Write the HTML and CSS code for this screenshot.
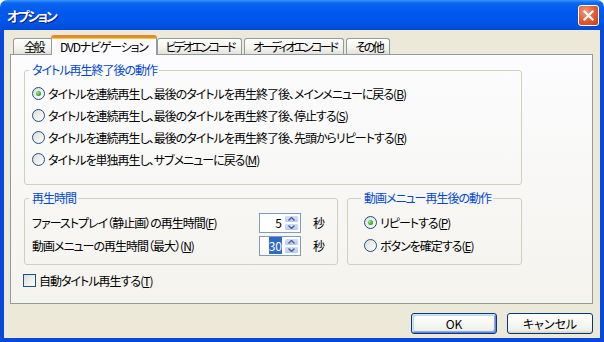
FILE: index.html
```html
<!DOCTYPE html>
<html lang="ja">
<head>
    <meta charset="UTF-8">
    <meta name="viewport" content="width=device-width, initial-scale=1.0">
    <title>オプション</title>
    <link rel="stylesheet" href="styles.css">
</head>
<body>

<div class="window">
    <div class="titlebar">
        <span class="title">オプション</span>
        <span class="close-btn">
            <svg width="13" height="13" viewBox="0 0 13 13">
                <path d="M2.5 2.5 L10.5 10.5 M10.5 2.5 L2.5 10.5" stroke="#fff" stroke-width="2.2" stroke-linecap="square"/>
            </svg>
        </span>
    </div>

    <div class="frame">
        <div class="tabs">
            <div class="tab">全般</div>
            <div class="tab active">DVDナビゲーション</div>
            <div class="tab">ビデオエンコード</div>
            <div class="tab">オーディオエンコード</div>
            <div class="tab">その他</div>
        </div>

        <div class="panel">
            <fieldset class="group group-end">
                <legend>タイトル再生終了後の動作</legend>
                <div class="option"><span class="radio checked"></span>タイトルを連続再生し、最後のタイトルを再生終了後、メインメニューに戻る(<u>B</u>)</div>
                <div class="option"><span class="radio"></span>タイトルを連続再生し、最後のタイトルを再生終了後、停止する(<u>S</u>)</div>
                <div class="option"><span class="radio"></span>タイトルを連続再生し、最後のタイトルを再生終了後、先頭からリピートする(<u>R</u>)</div>
                <div class="option"><span class="radio"></span>タイトルを単独再生し、サブメニューに戻る(<u>M</u>)</div>
            </fieldset>

            <div class="group-row">
                <fieldset class="group group-time">
                    <legend>再生時間</legend>
                    <div class="field">
                        <span class="field-label">ファーストプレイ（静止画）の再生時間(<u>F</u>)</span>
                        <span class="spin">
                            <span class="spin-value">5</span>
                            <span class="spin-btns">
                                <span class="spin-btn"><svg width="7" height="4" viewBox="0 0 7 4"><path d="M0.5 3.5 L3.5 0.5 L6.5 3.5" fill="none" stroke="#4d6185" stroke-width="1.4"/></svg></span>
                                <span class="spin-btn"><svg width="7" height="4" viewBox="0 0 7 4"><path d="M0.5 0.5 L3.5 3.5 L6.5 0.5" fill="none" stroke="#4d6185" stroke-width="1.4"/></svg></span>
                            </span>
                        </span>
                        <span class="unit">秒</span>
                    </div>
                    <div class="field">
                        <span class="field-label">動画メニューの再生時間（最大）(<u>N</u>)</span>
                        <span class="spin">
                            <span class="spin-value"><span class="selected">30</span></span>
                            <span class="spin-btns">
                                <span class="spin-btn"><svg width="7" height="4" viewBox="0 0 7 4"><path d="M0.5 3.5 L3.5 0.5 L6.5 3.5" fill="none" stroke="#4d6185" stroke-width="1.4"/></svg></span>
                                <span class="spin-btn"><svg width="7" height="4" viewBox="0 0 7 4"><path d="M0.5 0.5 L3.5 3.5 L6.5 0.5" fill="none" stroke="#4d6185" stroke-width="1.4"/></svg></span>
                            </span>
                        </span>
                        <span class="unit">秒</span>
                    </div>
                </fieldset>

                <fieldset class="group group-menu">
                    <legend>動画メニュー再生後の動作</legend>
                    <div class="option field"><span class="radio checked"></span>リピートする(<u>P</u>)</div>
                    <div class="option field"><span class="radio"></span>ボタンを確定する(<u>E</u>)</div>
                </fieldset>
            </div>

            <div class="option check-row"><span class="checkbox"></span>自動タイトル再生する(<u>T</u>)</div>
        </div>

        <div class="buttons">
            <button class="btn default">OK</button>
            <button class="btn">キャンセル</button>
        </div>
    </div>
</div>

</body>
</html>
```

FILE: styles.css
```css
* {
    box-sizing: border-box;
}

body {
    margin: 0;
    font-family: "Noto Sans CJK JP", "Liberation Sans", sans-serif;
    font-size: 12px;
    font-feature-settings: "palt";
    letter-spacing: -1px;
    color: #000;
    background: #fff;
}

.window {
    width: 604px;
    height: 342px;
    display: flex;
    flex-direction: column;
}

/* title bar */
.titlebar {
    height: 30px;
    display: flex;
    align-items: center;
    justify-content: space-between;
    padding: 0 5px 0 7px;
    border-radius: 7px 7px 0 0;
    background: linear-gradient(to bottom, #3d95ff 0, #0a66f0 3px, #0058ee 40%, #0055e5 75%, #0049d6 100%);
}

.title {
    color: #fff;
    font-weight: bold;
    font-size: 13px;
    letter-spacing: -2px;
    text-shadow: 1px 1px 0 #0a1883;
}

.close-btn {
    width: 21px;
    height: 21px;
    display: flex;
    align-items: center;
    justify-content: center;
    border: 1px solid #fff;
    border-radius: 3px;
    background: radial-gradient(circle at 35% 30%, #f09a7c 0, #e2582f 55%, #c7401c 100%);
}

/* window body */
.frame {
    flex: 1;
    background: #ece9d8;
    border: 4px solid #0a48dc;
    border-top: 0;
    padding: 5px 7px 0 6px;
}

.tabs {
    display: flex;
    align-items: flex-end;
    height: 19px;
    padding-left: 3px;
}

.tab {
    height: 16px;
    padding: 0 7px 0 8px;
    line-height: 15px;
    letter-spacing: -2.5px;
    border: 1px solid #919b9c;
    border-bottom: 0;
    border-radius: 3px 3px 0 0;
    background: linear-gradient(to bottom, #fff, #f3f3ef 60%, #e3e2dc);
}

.tab:first-child {
    padding: 0 9px 0 10px;
}

.tab + .tab {
    margin-left: 2px;
}

.tab.active {
    position: relative;
    z-index: 1;
    height: 20px;
    margin: 0 -2px -1px -2px;
    padding: 0 8px;
    line-height: 17px;
    letter-spacing: -1.2px;
    background: #fcfcfe;
    border-top: 3px solid #e68b2c;
    box-shadow: inset 0 1px 0 #ffc73c;
}

.tab.active + .tab {
    margin-left: 2px;
}

.panel {
    height: 250px;
    border: 1px solid #919b9c;
    background: linear-gradient(to bottom, #fcfcfe, #f4f3ee);
    padding: 8px 0 0 13px;
}

/* group boxes */
.group {
    margin: 0;
    border: 1px solid #d0d0bf;
    border-radius: 3px;
    padding: 5px 0 14px 7px;
}

.group legend {
    color: #0046d5;
    line-height: 14px;
    padding: 0 2px 0 3px;
    margin-left: -3px;
}

.group-end {
    width: 498px;
}

.group-row {
    display: flex;
    margin-top: 6px;
}

.group-time {
    width: 314px;
    margin-right: 9px;
    padding: 7px 0 8px 7px;
}

.group-menu {
    width: 175px;
    padding: 7px 0 8px 16px;
}

.option {
    display: flex;
    align-items: center;
    height: 22px;
    white-space: nowrap;
}

.field {
    display: flex;
    align-items: center;
    height: 21px;
    white-space: nowrap;
}

.field + .field {
    margin-top: 2px;
}

.field-label {
    width: 227px;
}

u {
    text-decoration-thickness: 1px;
    text-underline-offset: 1px;
}

/* controls */
.radio {
    width: 13px;
    height: 13px;
    margin-right: 3px;
    border: 1px solid #1c5180;
    border-radius: 50%;
    background: linear-gradient(135deg, #dcdcd7, #fff);
    display: flex;
    align-items: center;
    justify-content: center;
    flex-shrink: 0;
}

.radio.checked::after {
    content: "";
    width: 5px;
    height: 5px;
    border-radius: 50%;
    background: radial-gradient(circle at 35% 35%, #a0e89a, #21a121 70%);
}

.checkbox {
    width: 13px;
    height: 13px;
    margin-right: 3px;
    border: 1px solid #1c5180;
    background: linear-gradient(135deg, #dcdcd7, #fff);
    flex-shrink: 0;
}

.check-row {
    margin-top: 5px;
    margin-left: -1px;
    height: 20px;
}

.spin {
    display: flex;
    width: 42px;
    height: 20px;
    border: 1px solid #7f9db9;
    background: #fff;
    padding: 1px;
    letter-spacing: 0;
}

.spin-value {
    flex: 1;
    text-align: right;
    padding-right: 2px;
    line-height: 16px;
}

.selected {
    background: #316ac5;
    color: #fff;
}

.spin-btns {
    width: 15px;
    display: flex;
    flex-direction: column;
}

.spin-btn {
    flex: 1;
    display: flex;
    align-items: center;
    justify-content: center;
    border: 1px solid #fff;
    border-radius: 2px;
    background: linear-gradient(to bottom, #d3defb, #b6c9f7);
}

.unit {
    margin-left: 12px;
}

/* dialog buttons */
.buttons {
    display: flex;
    justify-content: flex-end;
    gap: 10px;
    margin-top: 9px;
}

.btn {
    width: 86px;
    height: 21px;
    padding: 0;
    font: inherit;
    letter-spacing: 0;
    color: #000;
    border: 1px solid #003c74;
    border-radius: 3px;
    background: linear-gradient(to bottom, #fff, #f0f0ea 85%, #d6d0c5);
    cursor: pointer;
}

.btn.default {
    box-shadow: inset 1px 1px 0 #cee7ff, inset -1px -1px 0 #6982ee, inset 2px 2px 0 #bcd4f6, inset -2px -2px 0 #89ade4;
}
```
